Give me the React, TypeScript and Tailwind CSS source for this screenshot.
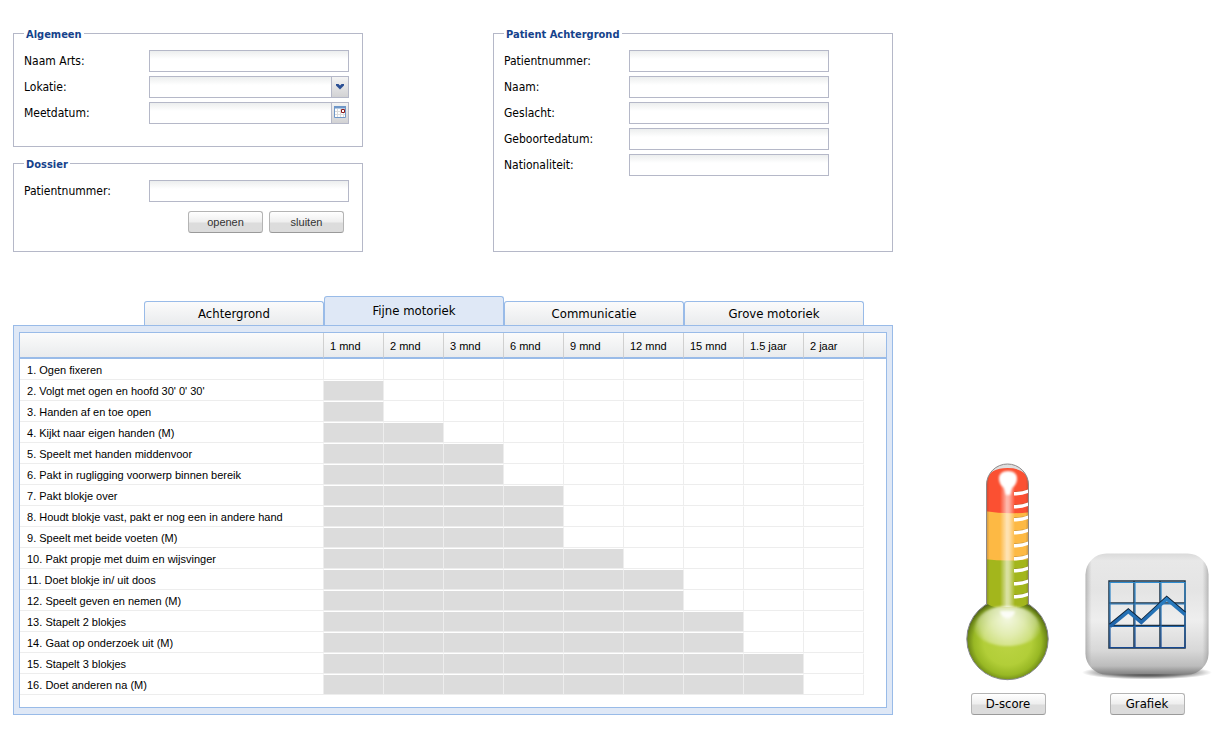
import { FC, ReactNode, useState } from "react";

const TABS = ["Achtergrond", "Fijne motoriek", "Communicatie", "Grove motoriek"];

const AGES = ["1 mnd", "2 mnd", "3 mnd", "6 mnd", "9 mnd", "12 mnd", "15 mnd", "1.5 jaar", "2 jaar"];

// filled: number of age columns that are greyed out
const ITEMS = [
  { name: "Ogen fixeren", filled: 0 },
  { name: "Volgt met ogen en hoofd 30' 0' 30'", filled: 1 },
  { name: "Handen af en toe open", filled: 1 },
  { name: "Kijkt naar eigen handen (M)", filled: 2 },
  { name: "Speelt met handen middenvoor", filled: 3 },
  { name: "Pakt in rugligging voorwerp binnen bereik", filled: 3 },
  { name: "Pakt blokje over", filled: 4 },
  { name: "Houdt blokje vast, pakt er nog een in andere hand", filled: 4 },
  { name: "Speelt met beide voeten (M)", filled: 4 },
  { name: "Pakt propje met duim en wijsvinger", filled: 5 },
  { name: "Doet blokje in/ uit doos", filled: 6 },
  { name: "Speelt geven en nemen (M)", filled: 6 },
  { name: "Stapelt 2 blokjes", filled: 7 },
  { name: "Gaat op onderzoek uit (M)", filled: 7 },
  { name: "Stapelt 3 blokjes", filled: 8 },
  { name: "Doet anderen na (M)", filled: 8 },
];

const TICKS = [32, 45, 58, 71, 84, 97, 109, 122, 135];

const inputClass =
  "h-[22px] min-w-0 flex-1 border border-[#b5b8c8] bg-linear-to-b from-[#eceeee] to-white to-40% px-1 text-xs outline-none";

const Group: FC<{ title: string; className: string; children: ReactNode }> = ({ title, className, children }) => (
  <fieldset className={`border border-[#b5b8c8] px-[10px] ${className}`}>
    <legend className="px-[2px] pt-[2px] text-[11px] leading-[13px] font-bold text-[#15428b]">{title}</legend>
    <div className="flex flex-col gap-1 pt-[9px]">{children}</div>
  </fieldset>
);

const Field: FC<{ id: string; label: string; children?: ReactNode }> = ({ id, label, children }) => (
  <div className="flex items-center">
    <label htmlFor={id} className="w-[125px] text-xs">
      {label}:
    </label>
    <div className="flex w-[200px]">{children ?? <input id={id} type="text" className={inputClass} />}</div>
  </div>
);

const Button: FC<{ children: ReactNode }> = ({ children }) => (
  <button
    type="button"
    className="h-[22px] w-[75px] rounded-[3px] border border-[#b4b4b4] border-b-[#9a9a9a] bg-linear-to-b from-white from-0% via-[#eeeeee] via-50% to-[#dcdcdc] to-55%"
  >
    {children}
  </button>
);

const Thermometer: FC = () => (
  <svg width="90" height="220" viewBox="0 0 90 220" aria-hidden="true">
    <defs>
      <clipPath id="tube">
        <path d="M23.5 150V24a21 21 0 0 1 42 0v126z" />
      </clipPath>
      <linearGradient id="shine">
        <stop offset="0" stopColor="#fff" stopOpacity="0" />
        <stop offset=".45" stopColor="#fff" stopOpacity=".6" />
        <stop offset=".6" stopColor="#fff" stopOpacity=".55" />
        <stop offset="1" stopColor="#fff" stopOpacity="0" />
      </linearGradient>
      <linearGradient id="edge">
        <stop offset="0" stopColor="#544" stopOpacity=".45" />
        <stop offset=".1" stopColor="#544" stopOpacity="0" />
        <stop offset=".9" stopColor="#544" stopOpacity="0" />
        <stop offset="1" stopColor="#544" stopOpacity=".4" />
      </linearGradient>
      <radialGradient id="bulb" cx=".5" cy=".53" r=".53">
        <stop offset="0" stopColor="#bcd444" />
        <stop offset=".55" stopColor="#b2ce38" />
        <stop offset=".78" stopColor="#98b824" />
        <stop offset=".91" stopColor="#6f8a18" />
        <stop offset="1" stopColor="#46521a" />
      </radialGradient>
      <radialGradient id="gloss" gradientUnits="userSpaceOnUse" cx="44.5" cy="157" r="34">
        <stop offset="0" stopColor="#fff" stopOpacity=".85" />
        <stop offset=".5" stopColor="#fff" stopOpacity=".6" />
        <stop offset=".85" stopColor="#fff" stopOpacity=".36" />
        <stop offset="1" stopColor="#fff" stopOpacity=".12" />
      </radialGradient>
      <filter id="soft" x="-20%" y="-20%" width="140%" height="140%">
        <feGaussianBlur stdDeviation="1.2" />
      </filter>
    </defs>
    <circle cx="44.5" cy="178" r="40.7" fill="url(#bulb)" stroke="#85878c" strokeWidth="1" />
    <g clipPath="url(#tube)">
      <path d="M22 0h45v52H22z" fill="#dedede" />
      <path d="M22 24Q24 7 44.500 7T67 24v29H22z" fill="#fb5032" />
      <path d="M22 50q22 4 45 1v50H22z" fill="#fdb944" />
      <path d="M22 98q22 3 45 0v44q-10 6-22.500 6T22 142z" fill="#a3b61c" />
      <path d="M22 0h45v142q-10 6-22.500 6T22 142z" fill="url(#edge)" />
      <path d="M37 22h15v124H37z" fill="url(#shine)" />
    </g>
    <path
      d="M11 166C15 152 27 145 44.500 145S74 152 78 166c0 11-15 19-33.500 19S11 177 11 166z"
      fill="url(#gloss)"
      filter="url(#soft)"
    />
    <path d="M23.500 143V24a21 21 0 0 1 42 0v119" fill="none" stroke="#8d8888" strokeWidth="1" />
    <path d="M36 18q0-8 9-8t9 8q0 5-5 9l-2 7h-4l-2-7q-5-4-5-9z" fill="#fff" filter="url(#soft)" />
    <path d="M37 150h15q-1 7-7.500 7t-7.500-7z" fill="#fff" fillOpacity=".8" filter="url(#soft)" />
    {TICKS.map((y) => (
      <g key={y}>
        <path d={`M51 ${y - 1}q9 0 14-2`} fill="none" stroke="#7a5c28" strokeOpacity=".35" strokeWidth="1.500" />
        <path d={`M51 ${y - 1}q8 0 14-2.500v3.500q-6 2.500-14 2.500z`} fill="#fff" />
      </g>
    ))}
  </svg>
);

const ChartIcon: FC = () => (
  <svg width="130" height="131" viewBox="0 0 130 131" aria-hidden="true">
    <defs>
      <linearGradient id="tile" x1="0" y1="0" x2="0" y2="1">
        <stop offset="0" stopColor="#dadada" />
        <stop offset=".06" stopColor="#e8e8e8" />
        <stop offset=".3" stopColor="#e4e4e4" />
        <stop offset=".55" stopColor="#eeeeee" />
        <stop offset=".8" stopColor="#d8d8d8" />
        <stop offset=".93" stopColor="#bcbcbc" />
        <stop offset="1" stopColor="#808080" />
      </linearGradient>
      <linearGradient id="tileSides">
        <stop offset="0" stopColor="#888" stopOpacity=".5" />
        <stop offset=".05" stopColor="#999" stopOpacity="0" />
        <stop offset=".95" stopColor="#999" stopOpacity="0" />
        <stop offset="1" stopColor="#888" stopOpacity=".5" />
      </linearGradient>
      <radialGradient id="shadow">
        <stop offset="0" stopColor="#000" stopOpacity=".95" />
        <stop offset=".6" stopColor="#000" stopOpacity=".5" />
        <stop offset="1" stopColor="#000" stopOpacity="0" />
      </radialGradient>
      <linearGradient id="grid" gradientUnits="userSpaceOnUse" x1="0" y1="30" x2="0" y2="99">
        <stop offset="0" stopColor="#2e8fd4" />
        <stop offset=".5" stopColor="#2470b4" />
        <stop offset="1" stopColor="#164690" />
      </linearGradient>
    </defs>
    <ellipse cx="65" cy="122.500" rx="65" ry="7" fill="url(#shadow)" />
    <rect x="3.500" y="3.500" width="123" height="121" rx="21" fill="url(#tile)" />
    <rect x="3.500" y="3.500" width="123" height="121" rx="21" fill="url(#tileSides)" />
    <g fill="none">
      <path d="M27 31h76v67H27zM52 31v67M78 31v67M27 53h76M27 75.500h76" stroke="#1c3347" strokeWidth="1.500" />
      <path d="M28 32.500h75v65H28zM53 32v66M79 32v66M28 54h75M28 76.500h75" stroke="url(#grid)" strokeWidth="1.200" />
      <path d="M28 75 46.300 60l13 11L84.700 47.500 103 63" stroke="#10243a" strokeWidth="3" />
      <path d="M28 76.500 46.300 61.500l13 11L84.700 49l18.300 15.500" stroke="url(#grid)" strokeWidth="3.500" />
    </g>
  </svg>
);

const App: FC = () => {
  const [activeTab, setActiveTab] = useState("Fijne motoriek");

  return (
    <div className="flex items-end bg-white pt-[26px] pb-5 pl-[13px] font-['DejaVu_Sans_Condensed','DejaVu_Sans',sans-serif] text-black">
      <main className="min-w-[880px] flex-1">
        <div className="flex justify-between">
          <div className="flex w-[350px] flex-col gap-[9px]">
            <Group title="Algemeen" className="pb-[22px]">
              <Field id="arts" label="Naam Arts" />
              <Field id="lokatie" label="Lokatie">
                <div className="relative flex flex-1">
                  <select id="lokatie" className={`${inputClass} appearance-none`} />
                  <span className="pointer-events-none absolute inset-y-0 right-0 flex w-[18px] items-center justify-center border border-[#b5b8c8] bg-linear-to-b from-[#f4f4f4] to-[#d2d2d4]">
                    <svg width="10" height="7" viewBox="0 0 10 7" aria-hidden="true">
                      <path d="M1 0h2.500L5 1.500 6.500 0H9v1.500L5 5.500 1 1.500z" fill="#2b4f94" />
                    </svg>
                  </span>
                </div>
              </Field>
              <Field id="meetdatum" label="Meetdatum">
                <input id="meetdatum" type="text" className={inputClass} />
                <button
                  type="button"
                  aria-label="Kies datum"
                  className="flex w-[17px] items-start justify-center border border-l-0 border-[#b5b8c8] bg-linear-to-b from-[#f4f4f4] to-[#d2d2d4] pt-[3px]"
                >
                  <svg width="12" height="12" viewBox="0 0 12 12" aria-hidden="true">
                    <path d="M.500.500h11v11H.500z" fill="#fff" stroke="#6f97c8" />
                    <path d="M0 0h12v2.500H0z" fill="#6f97c8" />
                    <path d="M3.500 3v8M6.500 3v8M9.500 3v8M1 5.500h10M1 8.500h10" stroke="#dcdcdc" />
                    <path d="M7.500 3.500h3v3h-3z" fill="#fff" stroke="#8f1a1a" />
                  </svg>
                </button>
              </Field>
            </Group>
            <Group title="Dossier" className="pb-[18px]">
              <Field id="dossier" label="Patientnummer" />
              <div className="flex justify-end gap-[6px] pt-[5px] pr-2 font-['Liberation_Sans',sans-serif] text-[11px] text-[#333]">
                <Button>openen</Button>
                <Button>sluiten</Button>
              </div>
            </Group>
          </div>
          <Group title="Patient Achtergrond" className="w-[400px]">
            <Field id="nummer" label="Patientnummer" />
            <Field id="naam" label="Naam" />
            <Field id="geslacht" label="Geslacht" />
            <Field id="geboortedatum" label="Geboortedatum" />
            <Field id="nationaliteit" label="Nationaliteit" />
          </Group>
        </div>

        <div role="tablist" className="mt-11 flex items-end pl-[131px]">
          {TABS.map((tab) => (
            <button
              key={tab}
              type="button"
              role="tab"
              aria-selected={tab === activeTab}
              onClick={() => setActiveTab(tab)}
              className={`w-[180px] rounded-t-[3px] border border-b-0 border-[#99bbe8] text-[13px] ${
                tab === activeTab ? "h-[29px] bg-[#dfe8f6]" : "h-6 bg-linear-to-b from-[#fbfbfb] to-[#e9ebed]"
              }`}
            >
              {tab}
            </button>
          ))}
        </div>
        <div className="border border-[#99bbe8] bg-[#dfe8f6] px-[5px] py-[6px]">
          <div className="border border-[#99bbe8] bg-white pb-3">
            <table className="w-full table-fixed border-separate border-spacing-0 text-left font-['Liberation_Sans',sans-serif] text-[11px]">
              <colgroup>
                <col className="w-[304px]" />
                {AGES.map((age) => (
                  <col key={age} className="w-[60px]" />
                ))}
                <col />
              </colgroup>
              <thead>
                <tr className="h-[26px] bg-linear-to-b from-[#fbfbfb] to-[#e8eaec]">
                  <th className="border-r border-b-2 border-r-[#d0d0d0] border-b-[#99bbe8] p-0" />
                  {AGES.map((age) => (
                    <th key={age} className="border-r border-b-2 border-r-[#d0d0d0] border-b-[#99bbe8] pt-[2px] pb-0 pl-[6px] font-normal">
                      {age}
                    </th>
                  ))}
                  <th className="border-b-2 border-[#99bbe8] p-0" />
                </tr>
              </thead>
              <tbody>
                {ITEMS.map((item, i) => (
                  <tr key={item.name} className="h-[21px]">
                    <td className="border-t border-r border-b border-[#ededed] border-t-white pt-[2px] pb-0 pl-[7px]">
                      {i + 1}. {item.name}
                    </td>
                    {AGES.map((age, col) => (
                      <td
                        key={age}
                        className={`border-t border-r border-b border-[#ededed] border-t-white p-0 ${
                          col < item.filled ? "bg-[#dcdcdc]" : ""
                        }`}
                      />
                    ))}
                    <td className="p-0" />
                  </tr>
                ))}
              </tbody>
            </table>
          </div>
        </div>
      </main>

      <aside className="flex w-[327px] items-end justify-end gap-[9px] pr-2 text-[13px]">
        <div className="flex w-[130px] flex-col items-center gap-3">
          <Thermometer />
          <Button>D-score</Button>
        </div>
        <div className="flex w-[130px] flex-col items-center gap-3">
          <ChartIcon />
          <Button>Grafiek</Button>
        </div>
      </aside>
    </div>
  );
};

export default App;
